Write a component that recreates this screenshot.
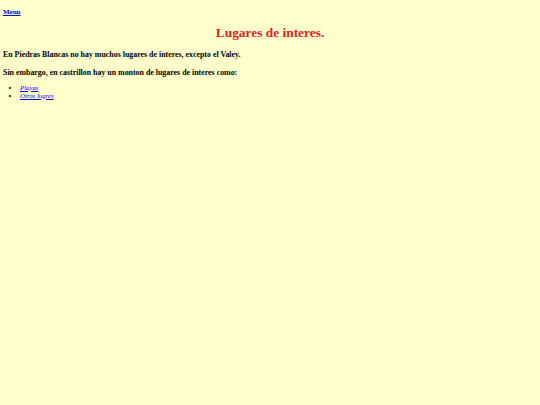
export default function App() {
  return (
    <div className="min-h-screen bg-[#ffffcc] px-[3px] pt-[8px] font-['Liberation_Serif',serif] text-black">
      <div className="text-[7px] leading-[8px]">
        <a href="#" className="font-bold text-[#0000ee] underline">
          Menu
        </a>
      </div>
      <h1 className="mt-[9px] text-center text-[13.4px] font-bold leading-[16px] text-[#e41e1e]">
        Lugares de interes.
      </h1>
      <p className="mt-[8.5px] text-[7.9px] font-bold leading-[9px]">
        En Piedras Blancas no hay muchos lugares de interes, excepto el Valey.
      </p>
      <p className="mt-[9px] text-[7.9px] font-bold leading-[9px]">
        Sin embargo, en castrillon hay un monton de lugares de interes como:
      </p>
      <ul className="mt-[7px] list-disc pl-[17px] text-[6.8px] leading-[8px]">
        <li>
          <a href="#" className="italic text-[#0000ee] underline">Playas</a>
        </li>
        <li>
          <a href="#" className="italic text-[#0000ee] underline">Otros lugres</a>
        </li>
      </ul>
    </div>
  );
}
